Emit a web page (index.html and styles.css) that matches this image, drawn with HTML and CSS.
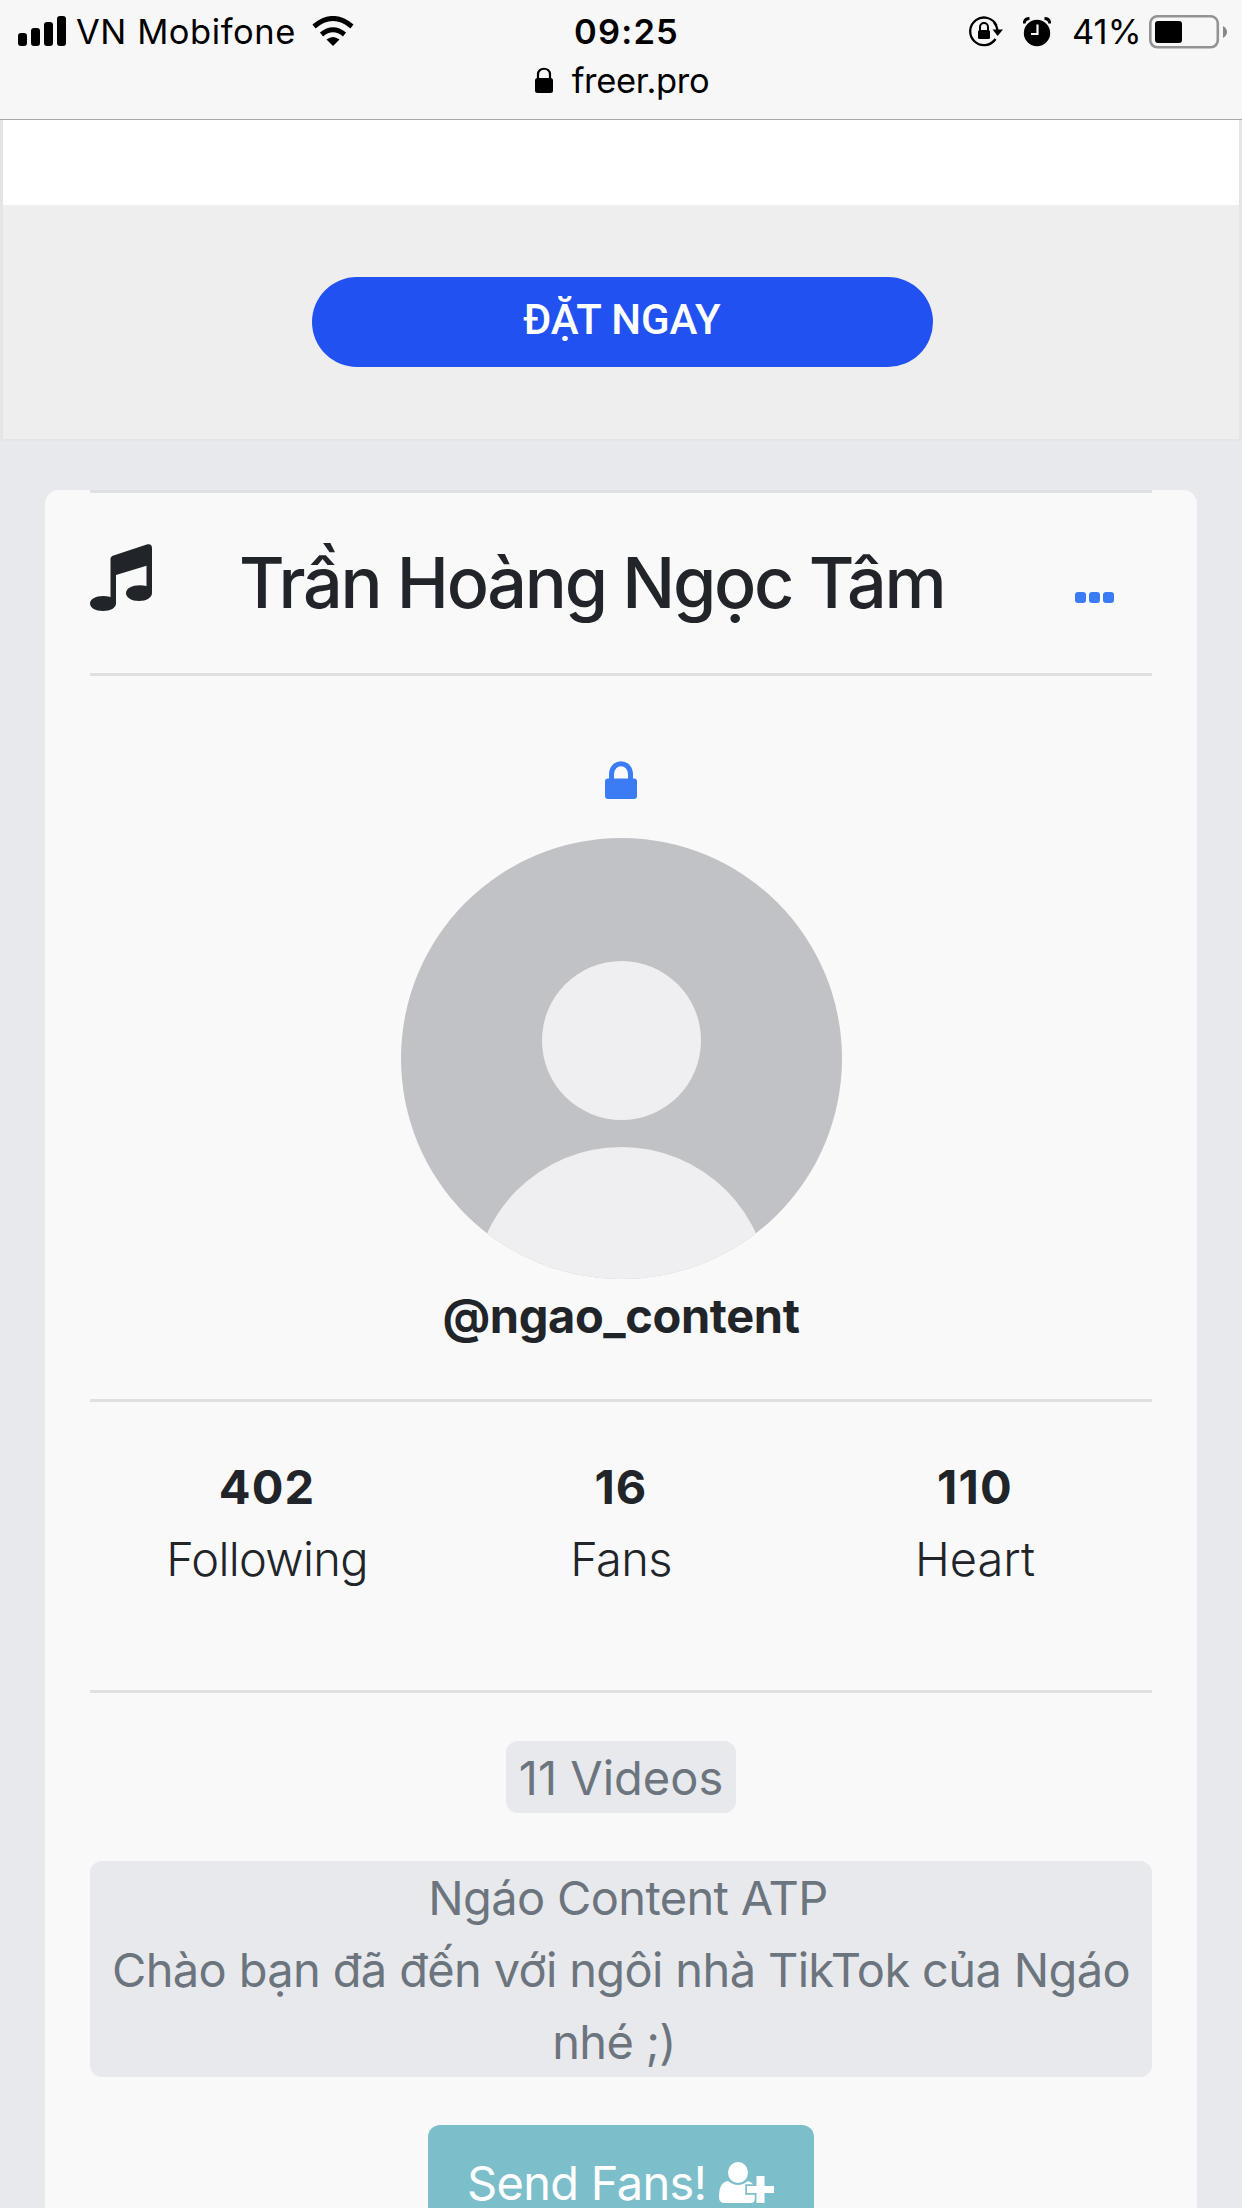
FILE: index.html
```html
<!DOCTYPE html>
<html lang="vi">
<head>
<meta charset="utf-8">
<title>freer.pro</title>
<link rel="stylesheet" href="styles.css">
</head>
<body>
<header class="browser">
  <div class="status">
    <div class="status-left">
      <svg class="signal" width="48" height="31" viewBox="0 0 48 31"><rect x="0" y="17" width="9" height="13" rx="3"/><rect x="13" y="12" width="9" height="18" rx="3"/><rect x="26" y="6" width="9" height="24" rx="3"/><rect x="39" y="0" width="9" height="30" rx="3"/></svg>
      <span class="carrier">VN Mobifone</span>
      <svg class="wifi" width="42" height="31" viewBox="0 0 42 31"><path d="M21 30 14.500 23.500Q21 18.500 27.500 23.500Z"/><path d="M9.500 18.500Q21 9 32.500 18.500M2 10.500Q21-5.500 40 10.500" fill="none" stroke="#000" stroke-width="5"/></svg>
    </div>
    <div class="time">09:25</div>
    <div class="status-right">
      <svg class="rotation" width="34" height="31" viewBox="0 0 34 31"><path d="M27.500 9.500A13.800 13.800 0 1 0 26.500 23M25 6.500Q28.500 10.500 28.500 16" fill="none" stroke="#000" stroke-width="2.300"/><path d="M23.500 13.500h10.500l-5.300 6.500z"/><path d="M11 15v-4a4 4 0 0 1 8 0v4" fill="none" stroke="#000" stroke-width="2"/><rect x="9" y="14" width="12" height="9" rx="1.500"/></svg>
      <svg class="alarm" width="28" height="30" viewBox="0 0 28 30"><circle cx="14" cy="16" r="13.200"/><path d="M1.200 6.500Q1.500 1.500 6.500 1.500M26.800 6.500Q26.500 1.500 21.500 1.500" fill="none" stroke="#000" stroke-width="3"/><path d="M14.500 7.500V17H8" fill="none" stroke="#f7f7f7" stroke-width="2.200"/></svg>
      <span class="percent">41%</span>
      <svg class="battery" width="78" height="34" viewBox="0 0 78 34"><rect x="1.300" y="1.300" width="67.500" height="31" rx="7" fill="none" stroke="#939393" stroke-width="2.600"/><rect x="6" y="6" width="27" height="22" rx="3"/><path d="M74 11q4 2.500 4 6t-4 6z" fill="#888"/></svg>
    </div>
  </div>
  <div class="address">
    <svg width="18" height="26" viewBox="0 0 18 26"><path d="M3 12V7.500C3-.2 15-.2 15 7.500V12" fill="none" stroke="#000" stroke-width="2.200"/><rect y="11" width="18" height="15" rx="2.500"/></svg>
    <span class="host">freer.pro</span>
  </div>
</header>

<section class="ad"><div class="ad-foot"><a class="order">ĐẶT NGAY</a></div></section>

<main class="card">
  <div class="profile-head">
    <svg class="music" width="62" height="67" viewBox="0 0 62 67"><path d="M20.500 15Q20.500 12.500 23.500 11.500L57.500.3Q62-.5 62 4V49C62 53.500 56.500 57 49 57C41.500 57 36 53.500 36 49C36 43 46 39.500 56.500 42V21.800L26 31V59.500C26 64 20.500 67 13 67C5.500 67 0 64 0 59.500C0 54 9.500 50 20.500 53Z"/></svg>
    <h1 class="name">Trần Hoàng Ngọc Tâm</h1>
    <svg class="dots" width="39" height="11" viewBox="0 0 39 11"><rect width="11" height="11" rx="3"/><rect x="14" width="11" height="11" rx="3"/><rect x="28" width="11" height="11" rx="3"/></svg>
  </div>
  <div class="identity">
    <svg class="lock" width="32" height="38" viewBox="0 0 32 38"><path d="M6.500 18V13.500C6.500-.8 25.500-.8 25.500 13.500V18" fill="none" stroke="#3b7cf5" stroke-width="5"/><rect y="17.500" width="32" height="20.500" rx="3"/></svg>
    <svg class="avatar" width="441" height="441" viewBox="0 0 441 441"><defs><clipPath id="disc"><circle cx="220.500" cy="220.500" r="220.500"/></clipPath></defs><g clip-path="url(#disc)"><rect width="441" height="441" fill="#c1c2c6"/><circle cx="220.500" cy="202.500" r="79.500" fill="#efeff1"/><circle cx="220.500" cy="457" r="148" fill="#efeff1"/></g></svg>
    <div class="handle">@ngao_content</div>
  </div>
  <div class="stats">
    <div><b>402</b><span>Following</span></div>
    <div><b>16</b><span>Fans</span></div>
    <div><b>110</b><span class="heart">Heart</span></div>
  </div>
  <div class="details">
    <div class="videos">11 Videos</div>
    <p class="bio"><span class="bio-title">Ngáo Content ATP</span><br>Chào bạn đã đến với ngôi nhà TikTok của Ngáo<br><span class="bio-end">nhé ;)</span></p>
    <button class="send"><span>Send Fans!</span><svg width="55" height="41" viewBox="0 0 55 41"><path d="M9 19Q19 27 29 19Q36 21 36 29V37Q36 41 31 41H6Q0 41 0 35Q0 20 9 19Z"/><ellipse cx="19" cy="10.500" rx="10" ry="10.500"/><path d="M37.500 14h8v10h9.500v7h-9.500v10h-8V31H28v-7h9.500z" stroke="#7dbecb" stroke-width="3.500" paint-order="stroke"/></svg></button>
  </div>
</main>
</body>
</html>
```
FILE: styles.css
```css
* { box-sizing: border-box; }
html { overflow: hidden; }
body {
  margin: 0;
  width: 1242px;
  height: 2208px;
  overflow: hidden;
  display: flex;
  flex-direction: column;
  background: #e8e9ed;
  color: #212529;
  font-family: Inter, "Noto Sans", sans-serif;
  font-size: 47px;
  line-height: 72px;
}
svg { display: block; flex: none; }

.browser {
  height: 120px;
  flex: none;
  background: #f7f7f7;
  border-bottom: 1px solid #a9a9a9;
  color: #000;
  font-size: 34.500px;
}
.status {
  display: grid;
  grid-template-columns: 1fr auto 1fr;
  height: 63px;
  line-height: 63px;
  padding: 0 15px 0 18px;
}
.status-left, .status-right { display: flex; align-items: center; }
.status-right { justify-content: flex-end; }
.signal { margin-right: 10px; }
.carrier { width: 217px; margin-right: 19px; white-space: nowrap; letter-spacing: 0.55px; }
.time { font-weight: 600; letter-spacing: 1.2px; padding-left: 8px; }
.rotation { margin-right: 20px; }
.alarm { margin-right: 21px; }
.percent { width: 71px; margin-right: 6px; letter-spacing: 0; }
.address {
  display: flex;
  justify-content: center;
  gap: 19px;
  padding-left: 2px;
  line-height: 35px;
}
.address svg { margin-top: 4px; }
.host { letter-spacing: -0.3px; }

.ad {
  height: 321px;
  flex: none;
  border: solid #e4e5e6;
  border-width: 0 3px 2px;
  padding-top: 85px;
  background: #fff;
}
.ad-foot {
  height: 234px;
  padding: 72px 0 0 2px;
  background: #eee;
}
.order {
  display: block;
  width: 621px;
  height: 90px;
  margin: 0 auto;
  border-radius: 45px;
  background: #2152f1;
  color: #fff;
  text-align: center;
  font: 500 42px/86px Roboto, sans-serif;
}

.card {
  flex: none;
  width: 1152px;
  height: 1800px;
  margin: 49px auto 0;
  padding: 0 45px;
  border-radius: 14px;
  background: #f9f9f9;
}
.profile-head {
  display: flex;
  height: 186px;
  padding-top: 51px;
  border: solid #dfe0e1;
  border-width: 3px 0;
}
.name {
  margin: -6px 0 0 87px;
  width: 705px;
  white-space: nowrap;
  font-size: 70px;
  line-height: 89px;
  font-weight: 500;
  letter-spacing: -2.25px;
}
.music { fill: #212529; }
.dots { margin: 48px 0 0 131px; fill: #3b7cf5; }
.identity {
  display: flex;
  flex-direction: column;
  align-items: center;
  height: 723px;
  padding-top: 85px;
}
.lock { margin-bottom: 39px; margin-right: 1px; fill: #3b7cf5; }
.handle { margin-top: 1px; font-weight: 700; letter-spacing: -0.4px; }
.stats {
  display: grid;
  grid-template-columns: repeat(3, 1fr);
  height: 294px;
  padding-top: 49px;
  border: solid #dfe0e1;
  border-width: 3px 0;
  text-align: center;
}
.stats b, .stats span { display: block; }
.stats b { letter-spacing: 1.2px; }
.stats span { font-weight: 300; letter-spacing: -0.7px; }
.stats .heart { letter-spacing: 0; }
.details {
  display: flex;
  flex-direction: column;
  align-items: center;
  padding-top: 48px;
}
.videos, .bio { border-radius: 12px; background: #e8e9ed; color: #6c757d; }
.videos { width: 230px; height: 72px; line-height: 74px; text-align: center; white-space: nowrap; }
.bio {
  width: 1062px;
  height: 216px;
  margin: 48px 0;
  padding-top: 1px;
  text-align: center;
  white-space: nowrap;
  letter-spacing: -0.65px;
}
.bio-title { padding-left: 14px; }
.bio-end { padding-right: 14px; }
.send {
  display: flex;
  gap: 14px;
  width: 386px;
  height: 114px;
  padding: 22px 0 0 39px;
  border: 0;
  border-radius: 12px;
  background: #7dbecb;
  color: #fff;
  font: inherit;
  line-height: 72px;
}
.send span { width: 238px; white-space: nowrap; text-align: left; letter-spacing: -0.7px; }
.send svg { margin-top: 15px; fill: #fff; }
```
